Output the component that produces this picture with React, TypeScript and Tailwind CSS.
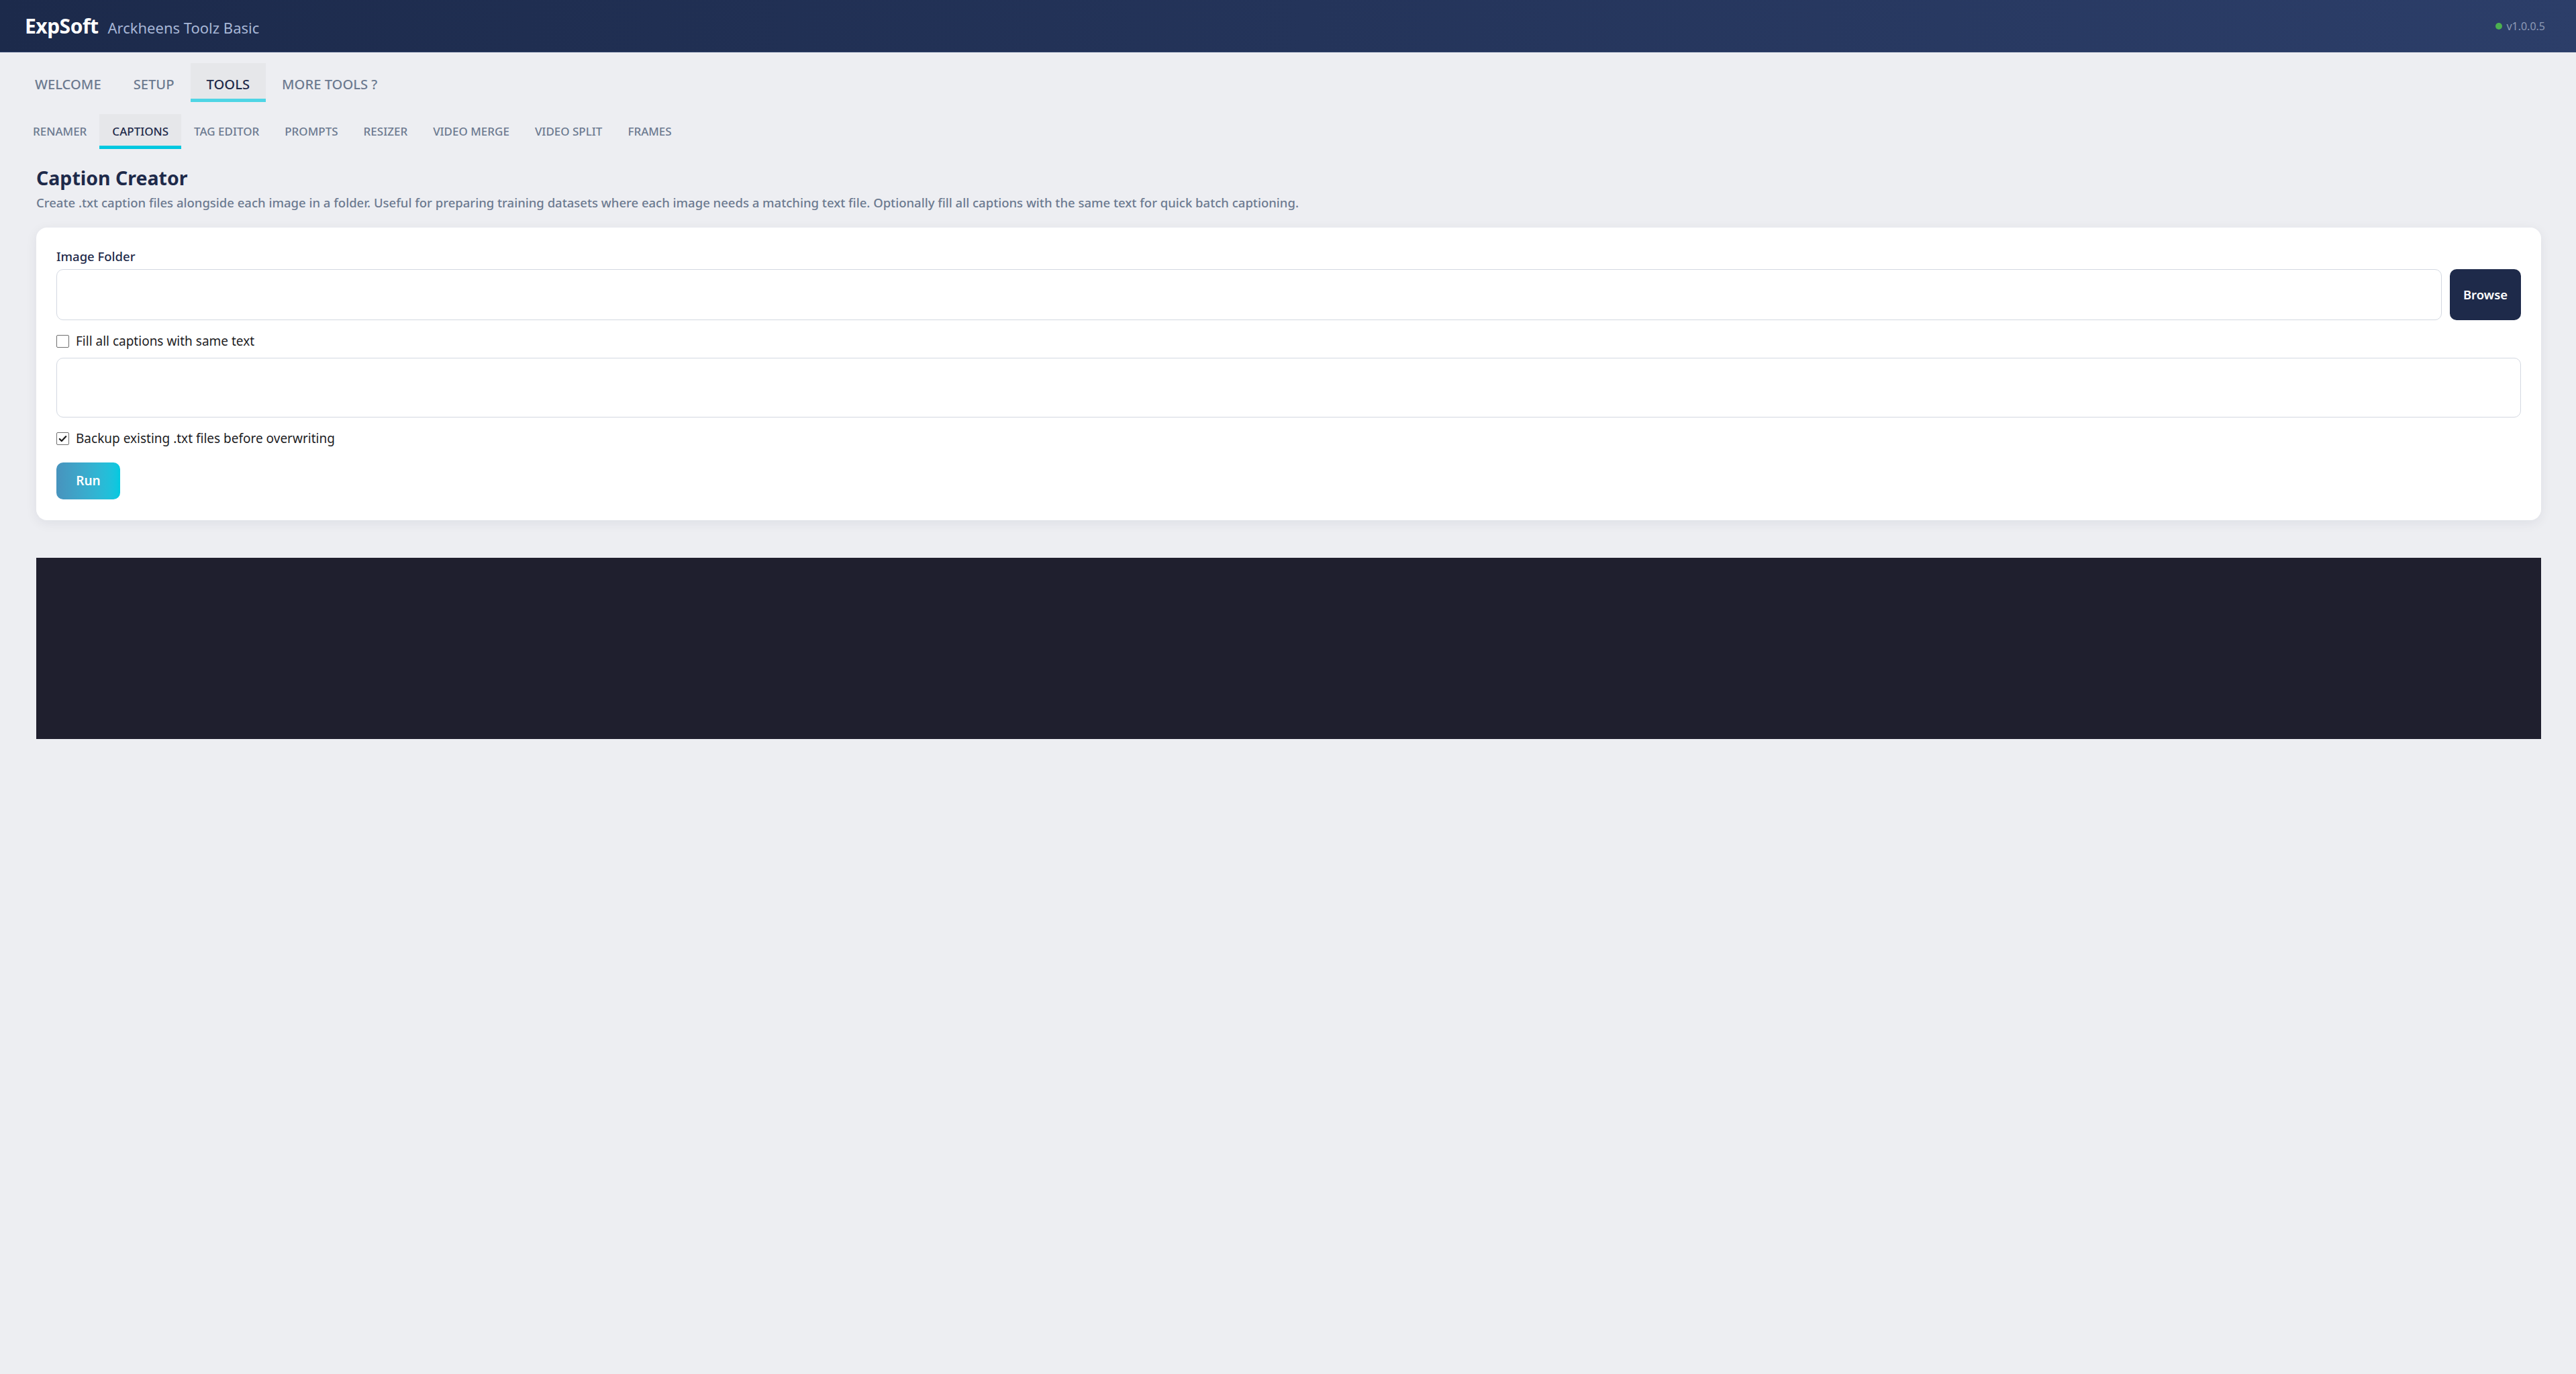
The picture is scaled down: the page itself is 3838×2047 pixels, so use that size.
import { useState } from 'react'

const mainTabs = ['WELCOME', 'SETUP', 'TOOLS', 'MORE TOOLS ?']
const subTabs = ['RENAMER', 'CAPTIONS', 'TAG EDITOR', 'PROMPTS', 'RESIZER', 'VIDEO MERGE', 'VIDEO SPLIT', 'FRAMES']

function Check({ checked, onToggle, label }: { checked: boolean; onToggle: () => void; label: string }) {
  return (
    <label className="flex h-[26px] cursor-pointer items-center gap-[10px]" onClick={onToggle}>
      <span className="flex h-[19px] w-[19px] items-center justify-center rounded-[2px] border-[1.5px] border-[#6f6f6f] bg-white">
        {checked && (
          <svg viewBox="0 0 16 16" className="h-[15px] w-[15px]">
            <path d="M3 8.5l3.2 3.2L13 4.5" fill="none" stroke="#1a1a1a" strokeWidth="2.4" strokeLinecap="round" strokeLinejoin="round" />
          </svg>
        )}
      </span>
      <span className="text-[19px] text-[#1d1d1f]">{label}</span>
    </label>
  )
}

export default function App() {
  const [tab, setTab] = useState('TOOLS')
  const [sub, setSub] = useState('CAPTIONS')
  const [folder, setFolder] = useState('')
  const [text, setText] = useState('')
  const [fill, setFill] = useState(false)
  const [backup, setBackup] = useState(true)

  return (
    <div className="min-h-screen bg-[#edeef2] font-['Noto_Sans',sans-serif]">
      <header className="flex h-[78px] items-center justify-between border-b border-[#33466f] bg-linear-to-r from-[#1c2a4b] to-[#2c3e69] pl-[37px] pr-[46px]">
        <div className="flex items-baseline gap-[14px]">
          <span className="text-[30px] font-bold tracking-[-0.5px] text-white">ExpSoft</span>
          <span className="text-[22px] text-[#a7b6d6]">Arckheens Toolz Basic</span>
        </div>
        <div className="flex items-center gap-[6px]">
          <span className="h-[10px] w-[10px] rounded-full bg-[#4cb050]" />
          <span className="text-[16px] text-[#8d9ab5]">v1.0.0.5</span>
        </div>
      </header>

      <nav className="mt-[16px] flex pl-[28px]">
        {mainTabs.map((t) => (
          <button
            key={t}
            onClick={() => setTab(t)}
            className={
              'h-[58px] border-b-[5px] px-[24px] pt-[9px] text-[20.2px] font-medium ' +
              (t === tab ? 'border-[#4fd5e5] bg-[#e6e7ea] text-[#1e2a4a]' : 'border-transparent text-[#6c7a90]')
            }
          >
            {t}
          </button>
        ))}
      </nav>

      <nav className="mt-[18px] flex pl-[30px]">
        {subTabs.map((t) => (
          <button
            key={t}
            onClick={() => setSub(t)}
            className={
              'h-[52px] border-b-[5px] px-[19px] pt-[4px] text-[17px] font-medium ' +
              (t === sub ? 'border-[#00c8e0] bg-[#e6e7ea] text-[#1e2a4a]' : 'border-transparent text-[#6c7a90]')
            }
          >
            {t}
          </button>
        ))}
      </nav>

      <main className="pl-[54px] pr-[52px]">
        <h1 className="mt-[23px] text-[28.5px] leading-[40px] font-bold text-[#1e2a4a]">Caption Creator</h1>
        <p className="mt-[3px] text-[18.5px] leading-[28px] font-medium text-[#6c7a90]">
          Create .txt caption files alongside each image in a folder. Useful for preparing training datasets where each image needs a matching text file. Optionally fill all captions with the same text for quick batch captioning.
        </p>

        <section className="mt-[23px] rounded-[16px] bg-white px-[30px] pt-[30px] pb-[31px] shadow-[0_4px_18px_rgba(20,30,60,0.07)]">
          <div className="text-[18.5px] leading-[26px] font-medium text-[#1e2a4a]">Image Folder</div>
          <div className="mt-[6px] flex gap-[12px]">
            <input
              value={folder}
              onChange={(e) => setFolder(e.target.value)}
              className="h-[76px] flex-1 rounded-[10px] border border-[#d3d8e1] bg-white px-[16px] text-[19px] outline-none"
            />
            <button className="h-[76px] w-[106px] rounded-[10px] bg-[#1e2a4a] text-[18.5px] font-semibold text-white">
              Browse
            </button>
          </div>

          <div className="mt-[18px]">
            <Check checked={fill} onToggle={() => setFill(!fill)} label="Fill all captions with same text" />
          </div>
          <textarea
            value={text}
            onChange={(e) => setText(e.target.value)}
            className="mt-[12px] block h-[89px] w-full resize-none rounded-[10px] border border-[#d3d8e1] bg-white px-[16px] py-[12px] text-[19px] outline-none"
          />

          <div className="mt-[18px]">
            <Check checked={backup} onToggle={() => setBackup(!backup)} label="Backup existing .txt files before overwriting" />
          </div>

          <button className="mt-[23px] h-[55px] w-[95px] rounded-[10px] bg-linear-to-r from-[#4793bd] to-[#00c9e0] text-[19px] font-semibold text-white">
            Run
          </button>
        </section>

        <div className="mt-[56px] h-[270px] bg-[#1f1f2e]" />
      </main>
    </div>
  )
}
